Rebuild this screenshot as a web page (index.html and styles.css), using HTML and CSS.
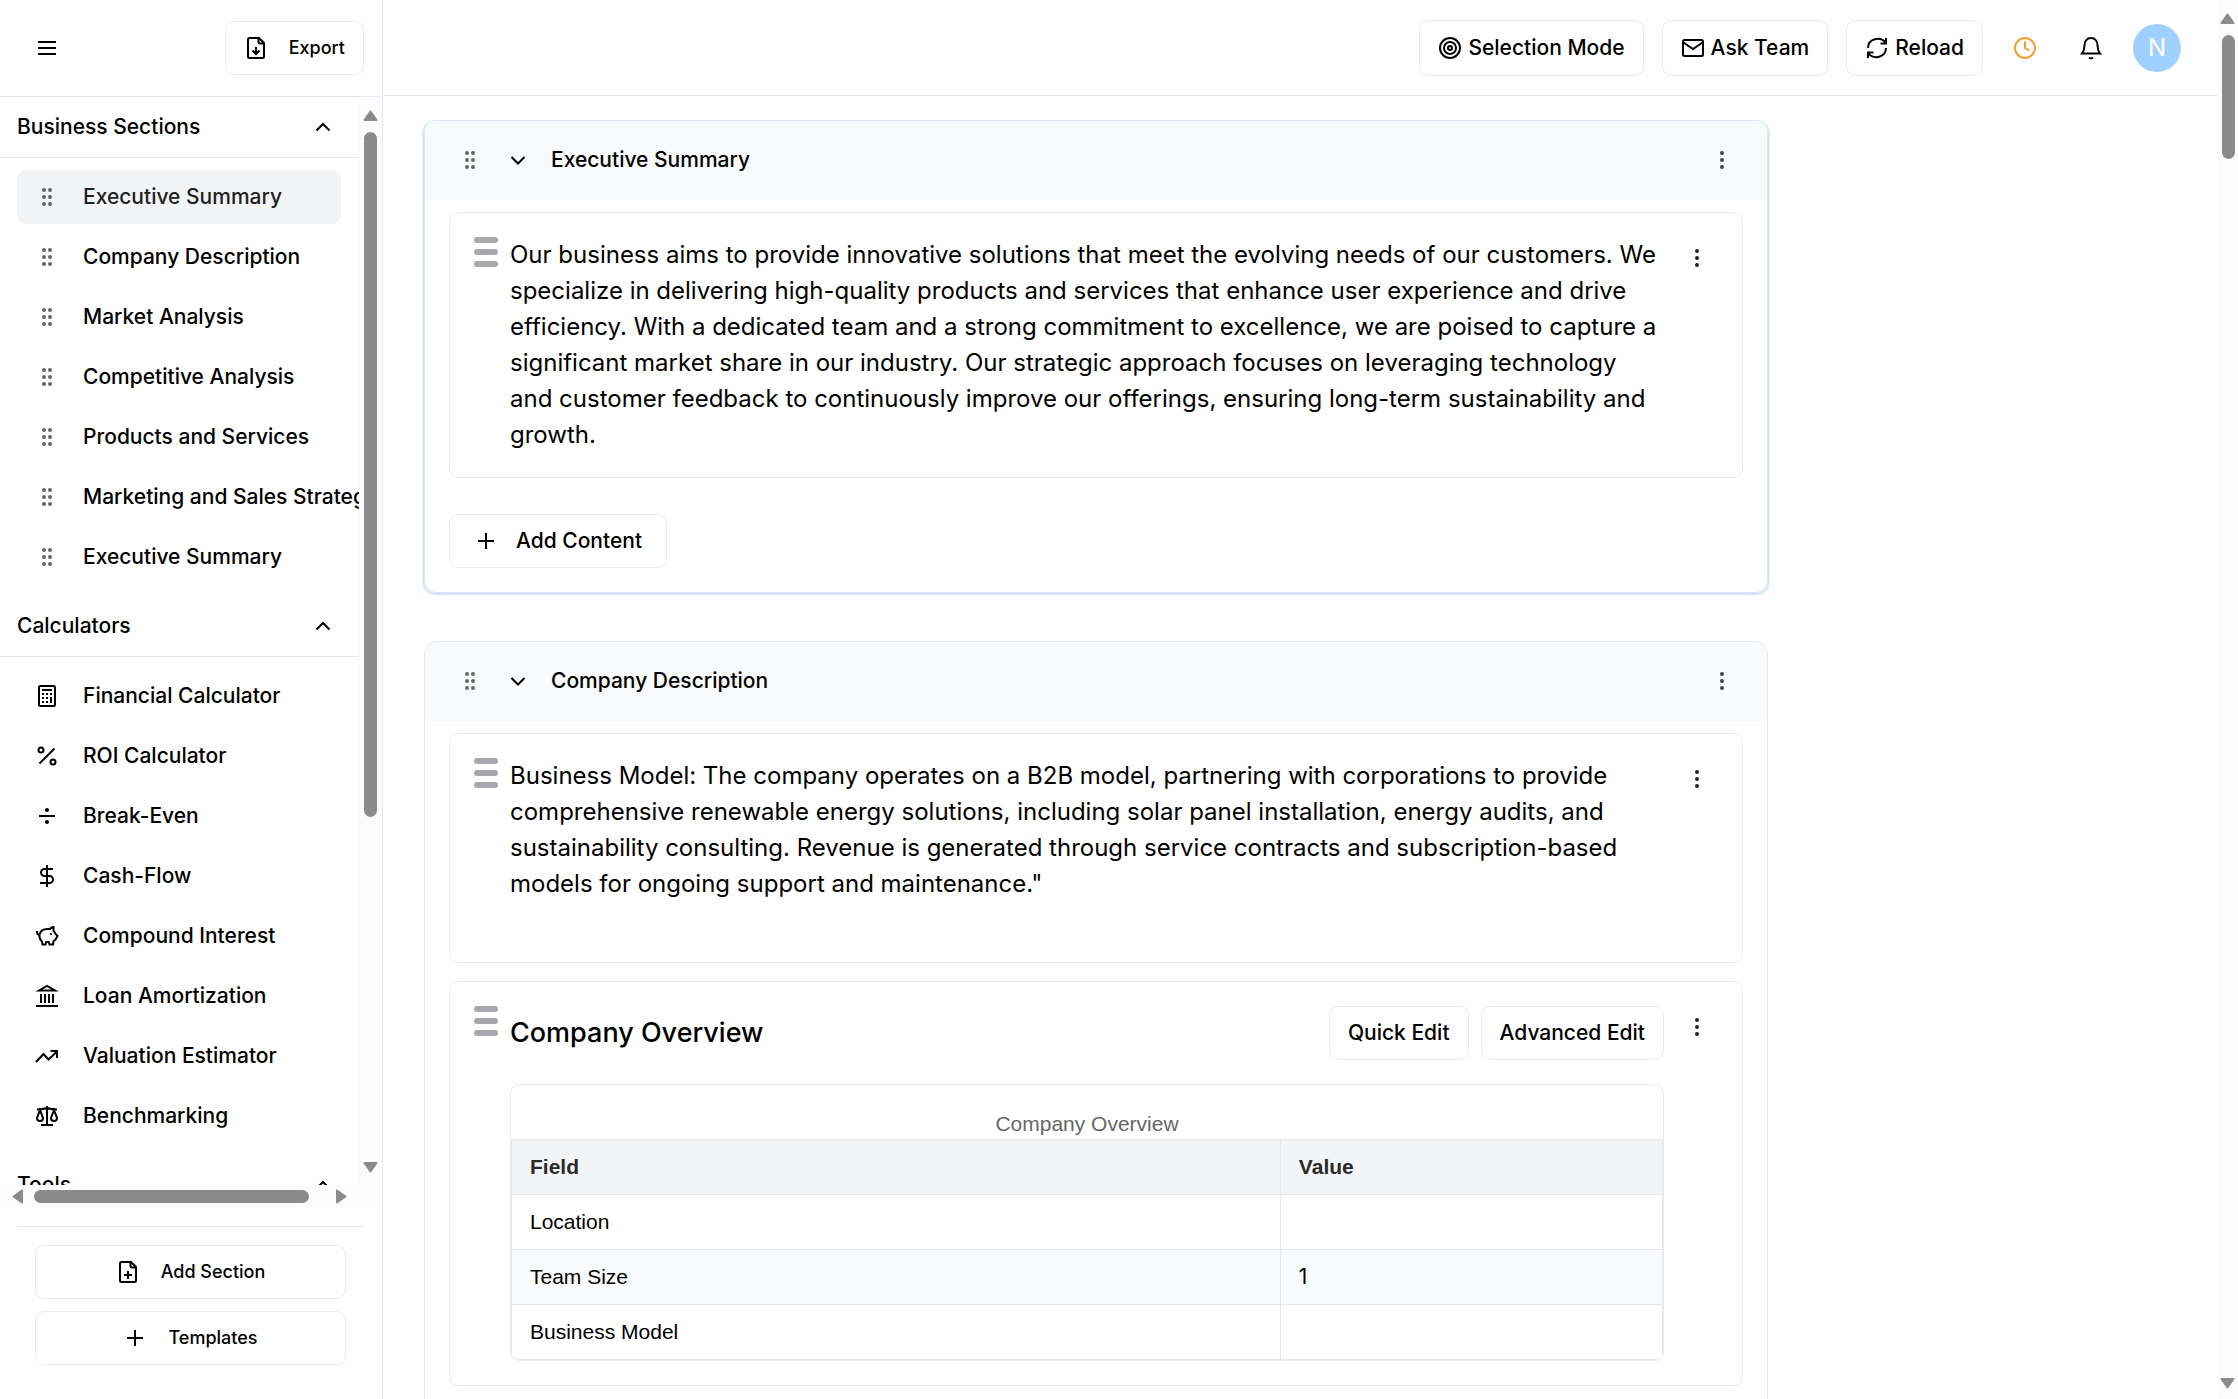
FILE: index.html
```html
<!DOCTYPE html>
<html lang="en">

<head>
  <meta charset="utf-8">
  <title>Business Plan Editor</title>
  <link rel="stylesheet" href="styles.css">
</head>

<body>
  <!-- icon sprite -->
  <svg class="sprite" aria-hidden="true">
    <symbol id="i-menu" viewBox="0 0 24 24"><path d="M3 6h18M3 12h18M3 18h18" /></symbol>
    <symbol id="i-file" viewBox="0 0 24 24"><path d="M15 2H5.5A1.5 1.5 0 0 0 4 3.500v17A1.5 1.5 0 0 0 5.5 22h13a1.5 1.5 0 0 0 1.5-1.5V7zM14.5 2v4A1.5 1.5 0 0 0 16 7.500h4" /></symbol>
    <symbol id="i-export" viewBox="0 0 24 24"><use href="#i-file" /><path d="M12 11v7M8.5 14.500l3.500 3.500 3.500-3.500" /></symbol>
    <symbol id="i-add-file" viewBox="0 0 24 24"><use href="#i-file" /><path d="M12 11v8M8 15h8" /></symbol>
    <symbol id="i-plus" viewBox="0 0 24 24"><path d="M12 4v16M4 12h16" /></symbol>
    <symbol id="i-up" viewBox="0 0 24 24"><path d="M5.5 15.500L12 9l6.500 6.500" /></symbol>
    <symbol id="i-down" viewBox="0 0 24 24"><path d="M5.5 9l6.500 6.500L18.500 9" /></symbol>
    <symbol id="i-drag" viewBox="0 0 24 24"><g fill="#666" stroke="none"><circle cx="9" cy="5" r="2" /><circle cx="15" cy="5" r="2" /><circle cx="9" cy="12" r="2" /><circle cx="15" cy="12" r="2" /><circle cx="9" cy="19" r="2" /><circle cx="15" cy="19" r="2" /></g></symbol>
    <symbol id="i-dots" viewBox="0 0 24 24"><g fill="currentColor" stroke="none"><circle cx="12" cy="5" r="2" /><circle cx="12" cy="12" r="2" /><circle cx="12" cy="19" r="2" /></g></symbol>
    <symbol id="i-calc" viewBox="0 0 24 24"><rect x="4" y="2" width="16" height="20" rx="1.5" /><path d="M7 6h10M7 10h2M11 10h2M15 10h2M7 14h2M11 14h2M7 18h2M11 18h2M16 13v6" /></symbol>
    <symbol id="i-percent" viewBox="0 0 24 24"><circle cx="6" cy="6" r="2.5" /><circle cx="18" cy="18" r="2.5" /><path d="M4.5 19.500l15-15" /></symbol>
    <symbol id="i-divide" viewBox="0 0 24 24"><path d="M4 12h16" /><g fill="currentColor" stroke="none"><circle cx="12" cy="6" r="2" /><circle cx="12" cy="18" r="2" /></g></symbol>
    <symbol id="i-dollar" viewBox="0 0 24 24"><path d="M12 1v22M18 5H9.500a3.500 3.500 0 0 0 0 7h5a3.500 3.500 0 0 1 0 7H5" /></symbol>
    <symbol id="i-pig" viewBox="0 0 24 24"><path d="M2 7v1.500a2 2 0 0 0 2.500 2C5.500 7 8.500 5 12 5h3c1-1.500 2.300-2 3.500-2v4c1 .8 1.600 1.700 2 2.800l2 2.200-2 3.500c-.8.700-1.300 1.200-2 1.700L18 20.500h-3.500l-.8-2.500h-2.500l-.7 2.500H7.500L7 17.500c-2-1.700-2.800-4-2.500-7" /><circle cx="16" cy="10" r="1" fill="currentColor" stroke="none" /></symbol>
    <symbol id="i-bank" viewBox="0 0 24 24"><path d="M4 6.500L12 2l8 4.500zM1 22h22M6 10v9M10 10v9M14 10v9M18 10v9" /></symbol>
    <symbol id="i-trend" viewBox="0 0 24 24"><path d="M1 18l7.500-8 5 5.500L22 7.500M15.500 7H22v7" /></symbol>
    <symbol id="i-scales" viewBox="0 0 24 24"><path d="M12 2v20M6 21h12M2 5.500c4 0 7-.5 10-1.500 3 1 6 1.500 10 1.500M5 6l-3 8c0 4 6 4 6 0zM19 6l-3 8c0 4 6 4 6 0z" /></symbol>
    <symbol id="i-target" viewBox="0 0 24 24"><circle cx="12" cy="12" r="10" /><circle cx="12" cy="12" r="6" /><circle cx="12" cy="12" r="2" /></symbol>
    <symbol id="i-mail" viewBox="0 0 24 24"><rect x="2" y="4" width="20" height="16" rx="1.5" /><path d="M2.500 6.500L12 13l9.500-6.500" /></symbol>
    <symbol id="i-reload" viewBox="0 0 24 24"><path d="M3 12C3 3 15-.5 21 7M21 2v5.500h-5.500M21 12c0 9-12 12.500-18 5M3 22v-5.500h5.500" /></symbol>
    <symbol id="i-clock" viewBox="0 0 24 24"><circle cx="12" cy="12" r="10" /><path d="M12 5.500V12l4.500 2.500" /></symbol>
    <symbol id="i-bell" viewBox="0 0 24 24"><path d="M3 17.500c1.500-2 2.500-4 2.500-8C5.500 5 8 2 12 2s6.500 3 6.500 7.500c0 4 1 6 2.500 8zM10 21.500c1 1 3 1 4 0" /></symbol>
    <symbol id="i-arrow" viewBox="0 0 15 11"><path fill="#8b8b8b" stroke="#8b8b8b" stroke-width="2" stroke-linejoin="round" d="M7.500 1.500L13.500 10h-12z" /></symbol>
  </svg>

  <div class="app">
    <aside class="sidebar">
      <div class="sidebar-top">
        <button class="icon-btn" aria-label="Menu"><svg class="icon"><use href="#i-menu" /></svg></button>
        <button class="btn small"><svg class="icon"><use href="#i-export" /></svg>Export</button>
      </div>

      <div class="sidebar-scroll">
        <nav class="sidebar-view">
          <button class="group-title">Business Sections<svg class="icon chev"><use href="#i-up" /></svg></button>
          <div class="group">
            <a href="#" class="item active"><svg class="icon"><use href="#i-drag" /></svg>Executive Summary</a>
            <a href="#" class="item"><svg class="icon"><use href="#i-drag" /></svg>Company Description</a>
            <a href="#" class="item"><svg class="icon"><use href="#i-drag" /></svg>Market Analysis</a>
            <a href="#" class="item"><svg class="icon"><use href="#i-drag" /></svg>Competitive Analysis</a>
            <a href="#" class="item"><svg class="icon"><use href="#i-drag" /></svg>Products and Services</a>
            <a href="#" class="item"><svg class="icon"><use href="#i-drag" /></svg>Marketing and Sales Strategy</a>
            <a href="#" class="item"><svg class="icon"><use href="#i-drag" /></svg>Executive Summary</a>
          </div>

          <button class="group-title">Calculators<svg class="icon chev"><use href="#i-up" /></svg></button>
          <div class="group">
            <a href="#" class="item"><svg class="icon"><use href="#i-calc" /></svg>Financial Calculator</a>
            <a href="#" class="item"><svg class="icon"><use href="#i-percent" /></svg>ROI Calculator</a>
            <a href="#" class="item"><svg class="icon"><use href="#i-divide" /></svg>Break-Even</a>
            <a href="#" class="item"><svg class="icon"><use href="#i-dollar" /></svg>Cash-Flow</a>
            <a href="#" class="item"><svg class="icon"><use href="#i-pig" /></svg>Compound Interest</a>
            <a href="#" class="item"><svg class="icon"><use href="#i-bank" /></svg>Loan Amortization</a>
            <a href="#" class="item"><svg class="icon"><use href="#i-trend" /></svg>Valuation Estimator</a>
            <a href="#" class="item"><svg class="icon"><use href="#i-scales" /></svg>Benchmarking</a>
          </div>

          <button class="group-title">Tools<svg class="icon chev"><use href="#i-up" /></svg></button>
        </nav>
        <div class="bar-y" aria-hidden="true">
          <svg class="arrow"><use href="#i-arrow" /></svg>
          <div class="track"><div class="thumb sidebar-thumb"></div></div>
          <svg class="arrow down"><use href="#i-arrow" /></svg>
        </div>
        <div class="bar-x" aria-hidden="true">
          <svg class="arrow left"><use href="#i-arrow" /></svg>
          <div class="track"><div class="thumb bottom-thumb"></div></div>
          <svg class="arrow right"><use href="#i-arrow" /></svg>
        </div>
      </div>

      <div class="sidebar-footer">
        <button class="btn small"><svg class="icon"><use href="#i-add-file" /></svg>Add Section</button>
        <button class="btn small"><svg class="icon"><use href="#i-plus" /></svg>Templates</button>
      </div>
    </aside>

    <main class="main">
      <header class="topbar">
        <button class="btn top"><svg class="icon"><use href="#i-target" /></svg>Selection Mode</button>
        <button class="btn top"><svg class="icon"><use href="#i-mail" /></svg>Ask Team</button>
        <button class="btn top"><svg class="icon"><use href="#i-reload" /></svg>Reload</button>
        <button class="icon-btn clock" aria-label="History"><svg class="icon"><use href="#i-clock" /></svg></button>
        <button class="icon-btn" aria-label="Notifications"><svg class="icon"><use href="#i-bell" /></svg></button>
        <button class="avatar">N</button>
      </header>

      <div class="content">
        <section class="card selected">
          <div class="card-head">
            <svg class="icon"><use href="#i-drag" /></svg>
            <button class="toggle" aria-label="Collapse"><svg class="icon"><use href="#i-down" /></svg></button>
            <h2>Executive Summary</h2>
            <button class="more" aria-label="More"><svg class="icon"><use href="#i-dots" /></svg></button>
          </div>
          <div class="card-body">
            <div class="block">
              <div class="handle"><i></i><i></i><i></i></div>
              <p>Our business aims to provide innovative solutions that meet the evolving needs of our customers. We specialize in delivering high-quality products and services that enhance user experience and drive efficiency. With a dedicated team and a strong commitment to excellence, we are poised to capture a significant market share in our industry. Our strategic approach focuses on leveraging technology and customer feedback to continuously improve our offerings, ensuring long-term sustainability and growth.</p>
              <button class="more" aria-label="More"><svg class="icon"><use href="#i-dots" /></svg></button>
            </div>
            <button class="btn add-content"><svg class="icon"><use href="#i-plus" /></svg>Add Content</button>
          </div>
        </section>

        <section class="card">
          <div class="card-head">
            <svg class="icon"><use href="#i-drag" /></svg>
            <button class="toggle" aria-label="Collapse"><svg class="icon"><use href="#i-down" /></svg></button>
            <h2>Company Description</h2>
            <button class="more" aria-label="More"><svg class="icon"><use href="#i-dots" /></svg></button>
          </div>
          <div class="card-body">
            <div class="block">
              <div class="handle"><i></i><i></i><i></i></div>
              <p>Business Model: The company operates on a B2B model, partnering with corporations to provide comprehensive renewable energy solutions, including solar panel installation, energy audits, and sustainability consulting. Revenue is generated through service contracts and subscription-based models for ongoing support and maintenance."<br><br></p>
              <button class="more" aria-label="More"><svg class="icon"><use href="#i-dots" /></svg></button>
            </div>
            <div class="block">
              <div class="handle"><i></i><i></i><i></i></div>
              <div class="block-main">
                <div class="block-title">
                  <h3>Company Overview</h3>
                  <button class="btn">Quick Edit</button>
                  <button class="btn">Advanced Edit</button>
                </div>
                <div class="table-box">
                  <table>
                    <caption>Company Overview</caption>
                    <thead>
                      <tr><th>Field</th><th>Value</th></tr>
                    </thead>
                    <tbody>
                      <tr><td>Location</td><td></td></tr>
                      <tr><td>Team Size</td><td class="num">1</td></tr>
                      <tr><td>Business Model</td><td></td></tr>
                    </tbody>
                  </table>
                </div>
              </div>
              <button class="more" aria-label="More"><svg class="icon"><use href="#i-dots" /></svg></button>
            </div>
          </div>
        </section>
      </div>
    </main>

    <div class="bar-y page-bar" aria-hidden="true">
      <svg class="arrow"><use href="#i-arrow" /></svg>
      <div class="track"><div class="thumb page-thumb"></div></div>
      <svg class="arrow down"><use href="#i-arrow" /></svg>
    </div>
  </div>
</body>

</html>
```

FILE: styles.css
```css
* {
  box-sizing: border-box;
}

body {
  margin: 0;
  font-family: Inter, "Liberation Sans", sans-serif;
  font-size: 21px;
  line-height: 30px;
  color: #000;
  background: #fff;
}

button {
  font: inherit;
  color: inherit;
  background: none;
  border: none;
  padding: 0;
  cursor: pointer;
}

.sprite {
  display: none;
}

.icon {
  width: 24px;
  height: 24px;
  flex: none;
  fill: none;
  stroke: currentColor;
  stroke-width: 2;
}

.app {
  display: flex;
  height: 100vh;
  overflow: hidden;
}

/* buttons */
.btn {
  display: flex;
  align-items: center;
  justify-content: center;
  height: 54px;
  padding: 0 18px;
  border: 1px solid #ebebeb;
  border-radius: 9px;
  background: #fff;
  font-weight: 500;
  white-space: nowrap;
}

.btn.small {
  gap: 21px;
  font-size: 18px;
}

.btn.top {
  gap: 6px;
  height: 56px;
}

.icon-btn {
  display: flex;
  align-items: center;
  justify-content: center;
  width: 48px;
  height: 48px;
}

/* sidebar */
.sidebar {
  display: flex;
  flex-direction: column;
  flex: none;
  width: 383px;
  border-right: 1px solid #e2e8f0;
}

.sidebar-top {
  display: flex;
  align-items: center;
  justify-content: space-between;
  height: 97px;
  padding: 0 18px 0 23px;
  border-bottom: 1px solid #e2e8f0;
}

.sidebar-scroll {
  display: grid;
  grid-template-columns: 1fr 23px;
  grid-template-rows: 1fr 23px;
  flex: 1;
  min-height: 0;
  background: #fcfcfc;
}

.sidebar-view {
  min-width: 0;
  min-height: 0;
  overflow: hidden;
  background: #fff;
}

.group-title {
  display: flex;
  align-items: center;
  justify-content: space-between;
  width: 100%;
  height: 61px;
  padding: 0 24px 0 17px;
  border-bottom: 1px solid #e2e8f0;
  font-weight: 500;
}

.group {
  display: flex;
  flex-direction: column;
  gap: 6px;
  padding: 12px 18px 12px 17px;
}

.item {
  display: flex;
  align-items: center;
  gap: 24px;
  height: 54px;
  padding-left: 18px;
  border-radius: 9px;
  color: #000;
  font-weight: 500;
  white-space: nowrap;
  text-decoration: none;
}

.item.active {
  background: #f3f4f6;
  color: #202224;
}

.sidebar-footer {
  display: flex;
  flex-direction: column;
  gap: 12px;
  margin: 18px 18px 0 17px;
  padding: 18px 18px 34px;
  border-top: 1px solid #e2e8f0;
}

/* scrollbars */
.bar-y,
.bar-x {
  display: flex;
  align-items: center;
  gap: 11px;
  background: #fcfcfc;
}

.bar-y {
  flex-direction: column;
  padding: 13px 0 12px;
}

.bar-x {
  padding: 0 10px;
}

.track {
  flex: 1;
}

.thumb {
  border-radius: 7px;
  background: #8b8b8b;
}

.bar-y .thumb {
  width: 13px;
}

.bar-x .thumb {
  height: 13px;
}

.sidebar-thumb {
  height: 685px;
}

.bottom-thumb {
  width: 275px;
}

.page-thumb {
  height: 124px;
}

.arrow {
  width: 15px;
  height: 11px;
  flex: none;
}

.arrow.down {
  transform: rotate(180deg);
}

.arrow.left {
  transform: rotate(-90deg);
}

.arrow.right {
  transform: rotate(90deg);
}

.bar-x {
  gap: 9px;
}

.page-bar {
  flex: none;
  width: 21px;
  padding: 13px 0 10px;
}

.page-bar .thumb {
  margin-left: 1px;
}

/* main */
.main {
  flex: 1;
  min-width: 0;
}

.topbar {
  display: flex;
  align-items: center;
  justify-content: flex-end;
  gap: 18px;
  height: 96px;
  padding-right: 36px;
  border-bottom: 1px solid #e2e8f0;
}

.clock {
  color: #f0a030;
}

.avatar {
  width: 48px;
  height: 48px;
  border-radius: 50%;
  background: #9fd0ff;
  color: #fff;
  font-size: 24px;
}

.content {
  display: flex;
  flex-direction: column;
  gap: 48px;
  max-width: 1426px;
  padding: 24px 41px;
}

.card {
  border: 1px solid #e8e9eb;
  border-radius: 12px;
}

.card.selected {
  border-color: #dde6f0;
  box-shadow: 0 1px 0 1px #cfe5fb, 1px 1px 0 1px #e6f1fc, -1px 1px 0 1px #e6f1fc;
}

.card-head {
  display: flex;
  align-items: center;
  height: 79px;
  padding: 0 24px 1px 33px;
  border-radius: 11px 11px 0 0;
  background: #f9fafc;
}

.toggle {
  display: flex;
  margin: 0 21px 0 24px;
}

.card-head h2 {
  flex: 1;
  margin: 0;
  font-size: 21px;
  font-weight: 500;
}

.more {
  display: flex;
  align-items: center;
  justify-content: center;
  width: 42px;
  height: 42px;
  flex: none;
  color: #222;
}

.card-head .more {
  color: #444;
}

.card-body {
  display: flex;
  flex-direction: column;
  gap: 18px;
  padding: 12px 24px 24px;
}

.block {
  display: flex;
  gap: 12px;
  padding: 24px;
  border: 1px solid #ebebeb;
  border-radius: 9px;
}

.handle {
  display: flex;
  flex-direction: column;
  gap: 6px;
  width: 24px;
  flex: none;
}

.handle i {
  height: 6px;
  border-radius: 3px;
  background: #a6a8ac;
}

.block p {
  flex: 1;
  margin: 0;
  font-size: 24px;
  line-height: 36px;
}

.add-content {
  gap: 18px;
  align-self: flex-start;
  margin-top: 18px;
  padding: 0 24px;
}

.block-main {
  flex: 1;
}

.block-title {
  display: flex;
  align-items: center;
  gap: 12px;
  margin-bottom: 24px;
}

.block-title h3 {
  flex: 1;
  margin: 0;
  font-size: 27px;
  font-weight: 500;
}

.table-box {
  overflow: hidden;
  border: 1px solid #ebebeb;
  border-radius: 9px;
}

table {
  width: 100%;
  border-collapse: collapse;
  table-layout: fixed;
  font-family: "Liberation Sans", Arial, sans-serif;
}

caption {
  padding-top: 24px;
  color: #666;
}

th,
td {
  height: 55px;
  padding: 0 18px;
  border: 1px solid #e5e7eb;
  text-align: left;
}

th:first-child {
  width: 66.8%;
}

th {
  background: #f3f4f6;
  color: #2a2a2a;
}

tbody tr:nth-child(even) {
  background: #f9fafc;
}

.num {
  font-family: Inter, sans-serif;
}
```
